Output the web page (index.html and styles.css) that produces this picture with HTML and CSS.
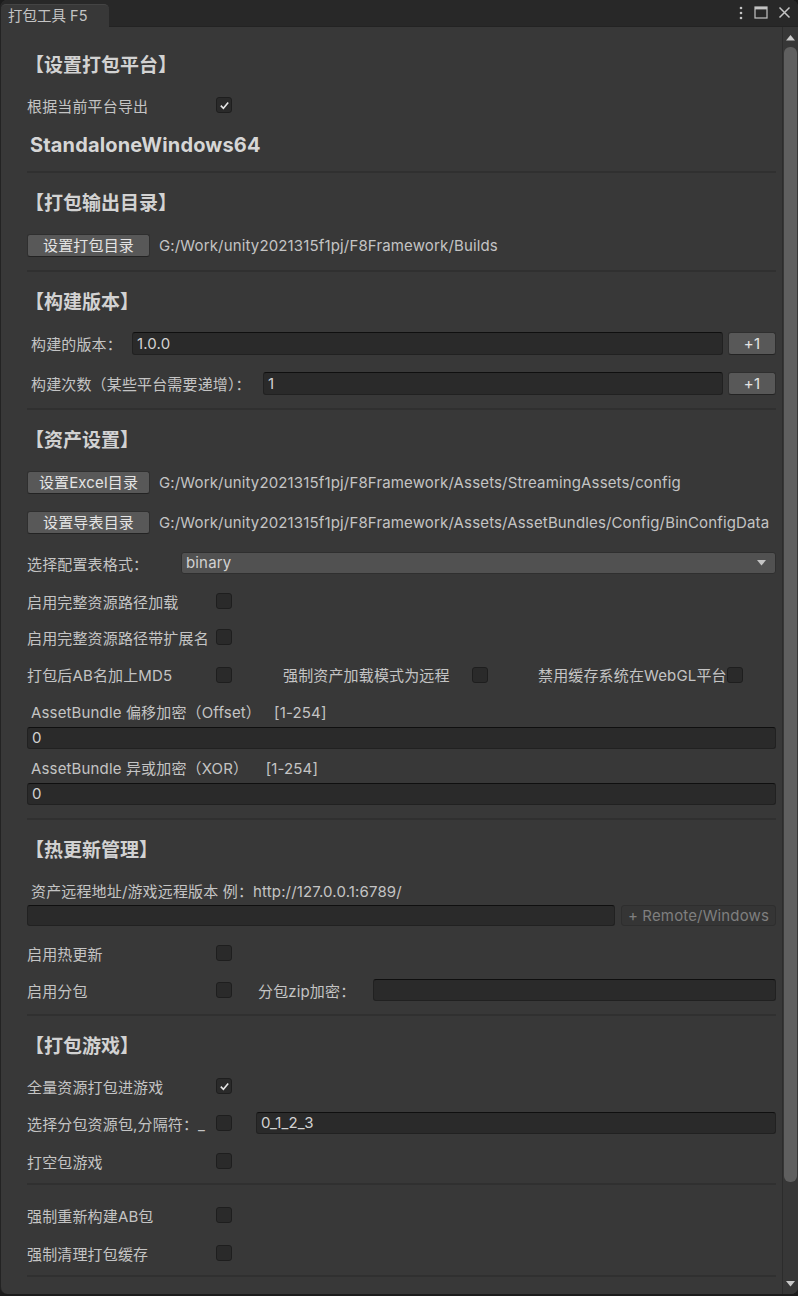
FILE: index.html
```html
<!DOCTYPE html>
<html lang="zh-CN">
<head>
  <meta charset="UTF-8">
  <title>打包工具 F5</title>
  <link rel="stylesheet" href="styles.css">
</head>
<body>
  <div class="window">
    <div class="tabbar">
      <div class="tab">打包工具 F5</div>
      <div class="tab-actions">
        <svg width="6" height="14" viewBox="0 0 6 14"><circle cx="3" cy="2" r="1.3"/><circle cx="3" cy="7" r="1.3"/><circle cx="3" cy="12" r="1.3"/></svg>
        <svg width="14" height="13" viewBox="0 0 14 13"><rect x="1" y="1" width="12" height="11" fill="none" stroke-width="1.2"/><rect x="1" y="1" width="12" height="2.4" class="fill"/></svg>
        <svg width="13" height="13" viewBox="0 0 13 13"><path d="M1.5 1.5 L11.5 11.5 M11.5 1.5 L1.5 11.5" fill="none" stroke-width="1.5"/></svg>
      </div>
    </div>

    <div class="body">
      <div class="content">
        <div class="heading first">【设置打包平台】</div>
        <div class="check-row">
          <span class="label">根据当前平台导出</span>
          <span class="checkbox checked"><svg width="16" height="16" viewBox="0 0 16 16"><path d="M4.8 8.6 L7.4 11.2 L12.2 5.4"/></svg></span>
        </div>
        <div class="platform">StandaloneWindows64</div>
        <div class="sep"></div>

        <div class="heading">【打包输出目录】</div>
        <div class="path-row">
          <button class="btn">设置打包目录</button>
          <span class="path">G:/Work/unity2021315f1pj/F8Framework/Builds</span>
        </div>
        <div class="sep"></div>

        <div class="heading">【构建版本】</div>
        <div class="field-row">
          <span class="label indent w-version">构建的版本：</span>
          <div class="input">1.0.0</div>
          <button class="btn small">+1</button>
        </div>
        <div class="field-row">
          <span class="label indent w-build">构建次数（某些平台需要递增）：</span>
          <div class="input">1</div>
          <button class="btn small">+1</button>
        </div>
        <div class="sep"></div>

        <div class="heading">【资产设置】</div>
        <div class="path-row">
          <button class="btn">设置Excel目录</button>
          <span class="path">G:/Work/unity2021315f1pj/F8Framework/Assets/StreamingAssets/config</span>
        </div>
        <div class="path-row tight">
          <button class="btn">设置导表目录</button>
          <span class="path">G:/Work/unity2021315f1pj/F8Framework/Assets/AssetBundles/Config/BinConfigData</span>
        </div>
        <div class="select-row">
          <span class="label w-select">选择配置表格式：</span>
          <div class="dropdown">binary<svg width="9" height="6" viewBox="0 0 9 6"><path d="M0 0 H9 L4.5 5.5 Z"/></svg></div>
        </div>
        <div class="check-row">
          <span class="label">启用完整资源路径加载</span>
          <span class="checkbox"></span>
        </div>
        <div class="check-row">
          <span class="label">启用完整资源路径带扩展名</span>
          <span class="checkbox"></span>
        </div>
        <div class="check-row triple">
          <div class="cell"><span class="label">打包后AB名加上MD5</span><span class="checkbox"></span></div>
          <div class="cell"><span class="label">强制资产加载模式为远程</span><span class="checkbox"></span></div>
          <div class="cell"><span class="label">禁用缓存系统在WebGL平台</span><span class="checkbox"></span></div>
        </div>
        <div class="caption first-cap">AssetBundle 偏移加密（Offset）&nbsp;&nbsp; [1-254]</div>
        <div class="input full">0</div>
        <div class="caption">AssetBundle 异或加密（XOR）&nbsp;&nbsp;&nbsp; [1-254]</div>
        <div class="input full">0</div>
        <div class="sep"></div>

        <div class="heading">【热更新管理】</div>
        <div class="caption remote-cap">资产远程地址/游戏远程版本 例：http://127.0.0.1:6789/</div>
        <div class="remote-row">
          <div class="input"></div>
          <button class="btn ghost">+ Remote/Windows</button>
        </div>
        <div class="check-row">
          <span class="label">启用热更新</span>
          <span class="checkbox"></span>
        </div>
        <div class="field-row split">
          <span class="label">启用分包</span>
          <span class="checkbox"></span>
          <span class="label zip-label">分包zip加密：</span>
          <div class="input"></div>
        </div>
        <div class="sep"></div>

        <div class="heading">【打包游戏】</div>
        <div class="check-row">
          <span class="label">全量资源打包进游戏</span>
          <span class="checkbox checked"><svg width="16" height="16" viewBox="0 0 16 16"><path d="M4.8 8.6 L7.4 11.2 L12.2 5.4"/></svg></span>
        </div>
        <div class="field-row split">
          <span class="label">选择分包资源包,分隔符：_</span>
          <span class="checkbox"></span>
          <div class="input sub-input">0_1_2_3</div>
        </div>
        <div class="check-row">
          <span class="label">打空包游戏</span>
          <span class="checkbox"></span>
        </div>
        <div class="sep"></div>
        <div class="check-row after-sep">
          <span class="label">强制重新构建AB包</span>
          <span class="checkbox"></span>
        </div>
        <div class="check-row last">
          <span class="label">强制清理打包缓存</span>
          <span class="checkbox"></span>
        </div>
        <div class="sep end"></div>
      </div>

      <div class="scrollbar">
        <svg class="arrow" width="9" height="6" viewBox="0 0 9 6"><path d="M0 5.5 H9 L4.5 0 Z"/></svg>
        <div class="thumb"></div>
        <svg class="arrow down" width="9" height="6" viewBox="0 0 9 6"><path d="M0 0 H9 L4.5 5.5 Z"/></svg>
      </div>
    </div>
  </div>
</body>
</html>
```

FILE: styles.css
```css
* {
  box-sizing: border-box;
}
html {
  background: #1c1c1c;
}
body {
  margin: 0;
  font-family: "Inter", "Noto Sans CJK SC", sans-serif;
  font-size: 15px;
  letter-spacing: 0.15px;
  color: #c4c4c4;
}
.window {
  width: 798px;
  height: 1294px;
  background: #383838;
  border-radius: 7px;
  border-left: 1px solid #232323;
  overflow: hidden;
  display: flex;
  flex-direction: column;
}
.tabbar {
  height: 27px;
  background: #282828;
  border-bottom: 1px solid #232323;
  display: flex;
  align-items: flex-end;
  justify-content: space-between;
}
.tab {
  width: 108px;
  height: 23px;
  margin-bottom: -1px;
  padding-left: 7px;
  line-height: 21px;
  font-size: 14.5px;
  letter-spacing: 0;
  color: #c4c4c4;
  background: #383838;
  border-radius: 5px 5px 0 0;
  border-top: 1px solid #444;
}
.tab-actions {
  align-self: center;
  display: flex;
  align-items: center;
  gap: 10px;
  padding-right: 7px;
  margin-top: -1px;
}
.tab-actions svg {
  fill: #c4c4c4;
  stroke: #c4c4c4;
}
.tab-actions svg circle {
  stroke: none;
}
.tab-actions .fill {
  stroke: none;
}
.body {
  flex: 1;
  display: flex;
  min-height: 0;
}
.content {
  flex: 1;
  padding: 8px 6px 0 26px;
  overflow: hidden;
}
.heading {
  margin-top: 19px;
  height: 24px;
  line-height: 24px;
  font-size: 19px;
  font-weight: bold;
  letter-spacing: 0;
  color: #d2d2d2;
  margin-left: -2px;
}
.platform {
  margin-top: 18px;
  height: 26px;
  line-height: 26px;
  padding-left: 3px;
  font-size: 20px;
  font-weight: bold;
  color: #d6d6d6;
}
.sep {
  margin-top: 13px;
  height: 2px;
  background: #303030;
}
.label {
  flex: none;
  width: 189px;
  white-space: nowrap;
}
.label.indent {
  padding-left: 4px;
}
.w-version {
  width: 105px;
}
.w-build {
  width: 236px;
}
.w-select {
  width: 154px;
}
.check-row {
  display: flex;
  align-items: center;
  height: 18px;
  margin-top: 18px;
}
.check-row.after-sep {
  margin-top: 21px;
}
.check-row.last {
  margin-top: 20px;
}
.check-row.triple {
  display: grid;
  grid-template-columns: 256px 255px 1fr;
}
.cell {
  display: flex;
  align-items: center;
}
.checkbox {
  flex: none;
  width: 16px;
  height: 16px;
  background: #2a2a2a;
  border: 1px solid #1e1e1e;
  border-radius: 3px;
  position: relative;
}
.checkbox svg {
  position: absolute;
  left: -1px;
  top: -1px;
  fill: none;
  stroke: #e6e6e6;
  stroke-width: 1.6;
}
.btn {
  font-family: inherit;
  font-size: 15px;
  letter-spacing: 0.15px;
  color: #e4e4e4;
  background: #585858;
  border: 1px solid #2f2f2f;
  border-bottom-color: #232323;
  border-radius: 3px;
  padding: 0;
  height: 23px;
  line-height: 20px;
}
.btn.small {
  flex: none;
  width: 48px;
  margin-left: 5px;
}
.btn.ghost {
  flex: none;
  width: 155px;
  height: 21px;
  margin-left: 6px;
  color: #7f7f7f;
  background: #353535;
  border-color: #2e2e2e;
}
.path-row {
  display: flex;
  align-items: center;
  height: 23px;
  margin-top: 18px;
}
.path-row.tight {
  margin-top: 17px;
}
.path-row .btn {
  flex: none;
  width: 123px;
}
.path {
  margin-left: 9px;
  white-space: nowrap;
}
.field-row {
  display: flex;
  align-items: center;
  height: 23px;
  margin-top: 17px;
}
.field-row.split {
  height: 22px;
}
.input {
  flex: 1;
  height: 23px;
  line-height: 21px;
  padding-left: 4px;
  background: #2a2a2a;
  border: 1px solid #212121;
  border-top-color: #0f0f0f;
  border-radius: 3px;
  color: #d2d2d2;
  white-space: nowrap;
}
.field-row.split .input {
  height: 22px;
  line-height: 20px;
}
.zip-label {
  width: 115px;
  margin-left: 26px;
}
.sub-input {
  margin-left: 24px;
}
.input.full {
  height: 22px;
  line-height: 20px;
  margin-top: 5px;
}
.select-row {
  display: flex;
  align-items: center;
  height: 22px;
  margin-top: 18px;
}
.dropdown {
  flex: 1;
  height: 22px;
  line-height: 20px;
  padding: 0 9px 0 4px;
  background: #515151;
  border: 1px solid #2f2f2f;
  border-radius: 3px;
  color: #d2d2d2;
  display: flex;
  justify-content: space-between;
  align-items: center;
}
.dropdown svg {
  fill: #c4c4c4;
}
.caption {
  margin-top: 11px;
  height: 18px;
  line-height: 18px;
  padding-left: 4px;
  white-space: nowrap;
}
.caption.first-cap {
  margin-top: 22px;
}
.caption.remote-cap {
  margin-top: 20px;
}
.remote-row {
  display: flex;
  align-items: center;
  height: 21px;
  margin-top: 4px;
}
.remote-row .input {
  height: 21px;
  line-height: 19px;
}
.scrollbar {
  flex: none;
  width: 16px;
  background: #373737;
  border-left: 1px solid #2c2c2c;
  display: flex;
  flex-direction: column;
  align-items: center;
}
.scrollbar .arrow {
  fill: #c8c8c8;
  margin-top: 8px;
  flex: none;
}
.scrollbar .arrow.down {
  margin-top: auto;
  margin-bottom: 7px;
}
.thumb {
  flex: none;
  width: 13px;
  height: 1135px;
  margin-top: 6px;
  background: #5f5f5f;
  border-radius: 6px;
}
```
